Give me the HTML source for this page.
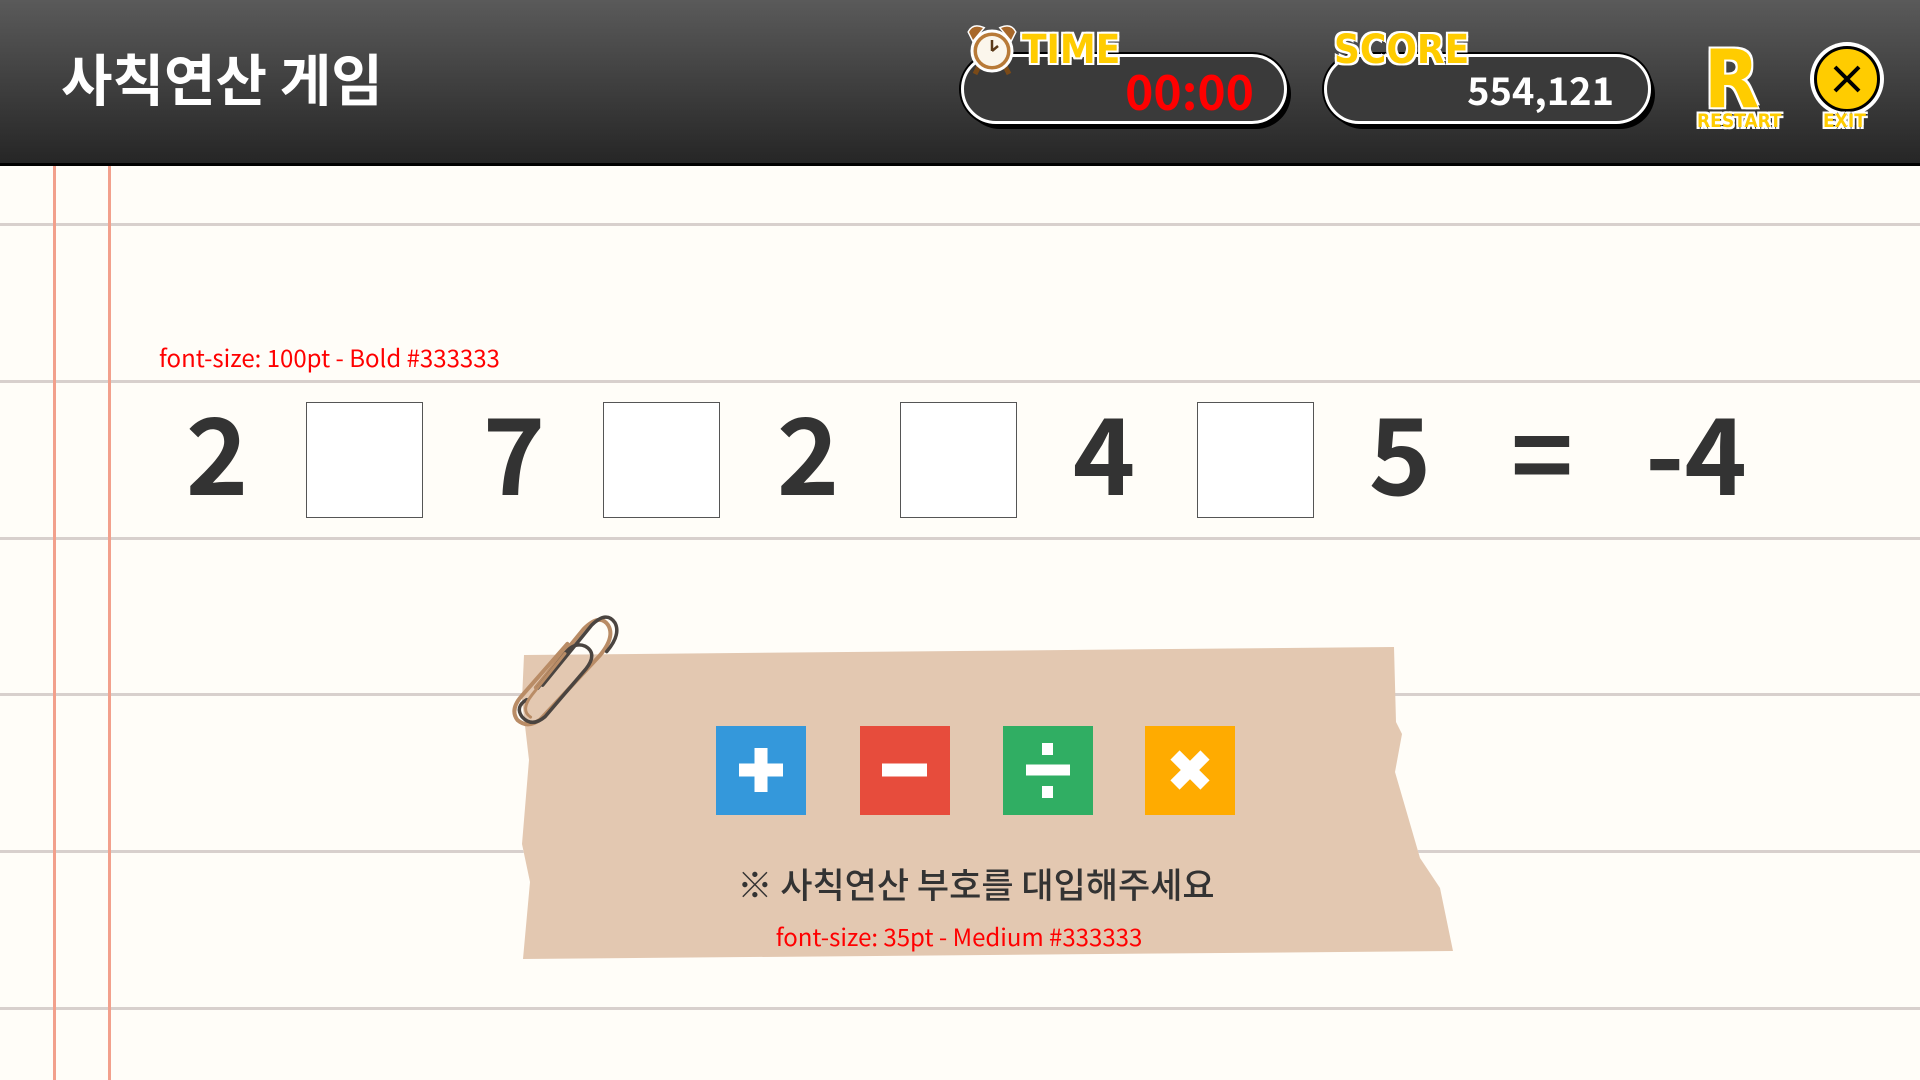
<!DOCTYPE html>
<html><head><meta charset="utf-8"><style>
*{margin:0;padding:0;box-sizing:border-box}
body{width:1920px;height:1080px;overflow:hidden;background:#fffdf8;position:relative;font-family:"Liberation Sans","Noto Sans CJK KR",sans-serif}
.hdr{position:absolute;left:0;top:0;width:1920px;height:166px;background:linear-gradient(#5a5a5a,#262626);border-bottom:3px solid #000}
.title{position:absolute;left:61px;top:50px;color:#fff;font-size:56px;font-weight:bold;font-family:"Noto Sans CJK KR",sans-serif;line-height:1}
.pill{position:absolute;height:70px;border:3px solid #fff;border-radius:35px;background:#3a3a3a;box-shadow:4px 5px 0 #000,0 0 0 2px #000}
.pill span{position:absolute;right:32px;top:4px;font-weight:bold;line-height:56px;font-family:"Noto Sans CJK KR",sans-serif}
.lbl{position:absolute;font-weight:bold;color:#ffcc00;-webkit-text-stroke:2px #000;paint-order:stroke fill;text-shadow:2px 2px 0 #fff,-2px -2px 0 #fff,2px -2px 0 #fff,-2px 2px 0 #fff;line-height:1;font-family:"DejaVu Sans Condensed","Liberation Sans",sans-serif}
.hl{position:absolute;left:0;width:1920px;height:3px;background:#d8d0cd}
.vl{position:absolute;top:166px;height:914px;width:3px;background:#f2a08c}
.num{position:absolute;top:389px;font-size:106px;font-weight:bold;color:#333;line-height:120px;text-align:center;width:120px;font-family:"Noto Sans CJK KR",sans-serif}
.box{position:absolute;top:402px;width:117px;height:116px;border:1.5px solid #555;background:#fff}
.red{position:absolute;color:#f00;font-size:24px;font-family:"Noto Sans CJK KR",sans-serif;line-height:1}
.btn{position:absolute;top:726px;width:90px;height:89px}
</style></head><body>
<div class="hdr">
<div class="title">사칙연산 게임</div>
<div class="pill" style="left:961px;top:54px;width:326px"><span style="color:#f00;font-size:48px;right:30px">00:00</span></div>
<div class="pill" style="left:1324px;top:54px;width:327px"><span style="color:#fff;font-size:38px;right:34px">554,121</span></div>
<svg style="position:absolute;left:965px;top:22px" width="54" height="54" viewBox="0 0 54 54">
<path d="M8 18 L4 10 Q8 2 18 6 Z M46 18 L50 10 Q46 2 36 6 Z" fill="#a8682a" stroke="#fff" stroke-width="3" paint-order="stroke"/>
<path d="M14 44 L10 52 M40 44 L44 52" stroke="#7a4a18" stroke-width="5"/>
<circle cx="27" cy="29" r="20" fill="#b87a38" stroke="#fff" stroke-width="3"/>
<circle cx="27" cy="29" r="15" fill="#fbf6ec"/>
<path d="M27 29 L27 18 M27 29 L33 24" stroke="#5a3a1a" stroke-width="2.5"/>
</svg>
<div class="lbl" style="left:1022px;top:30px;font-size:40px">TIME</div>
<div class="lbl" style="left:1334px;top:30px;font-size:40px">SCORE</div>
<div class="lbl" style="left:1704px;top:40px;font-size:80px;-webkit-text-stroke:3px #000">R</div>
<div class="lbl" style="left:1697px;top:112px;font-size:19px">RESTART</div>
<div style="position:absolute;left:1810px;top:42px;width:74px;height:74px;border-radius:50%;background:#fff;padding:4px"><div style="width:66px;height:66px;border-radius:50%;background:#ffcc00;border:3px solid #000;position:relative">
<svg width="60" height="60" viewBox="0 0 60 60" style="position:absolute;left:0;top:0"><path d="M18 18 L42 42 M42 18 L18 42" stroke="#000" stroke-width="4"/></svg></div></div>
<div class="lbl" style="left:1823px;top:112px;font-size:19px">EXIT</div>
</div>
<div class="hl" style="top:223px"></div><div class="hl" style="top:380px"></div><div class="hl" style="top:537px"></div><div class="hl" style="top:693px"></div><div class="hl" style="top:850px"></div><div class="hl" style="top:1007px"></div>
<div class="vl" style="left:53px"></div><div class="vl" style="left:108px"></div>
<div class="red" style="left:159px;top:345px">font-size: 100pt - Bold #333333</div>
<div class="num" style="left:157px">2</div><div class="box" style="left:306px"></div>
<div class="num" style="left:454px">7</div><div class="box" style="left:603px"></div>
<div class="num" style="left:748px">2</div><div class="box" style="left:900px"></div>
<div class="num" style="left:1044px">4</div><div class="box" style="left:1197px"></div>
<div class="num" style="left:1340px">5</div>
<div class="num" style="left:1482px">=</div>
<div class="num" style="left:1626px;width:140px">-4</div>
<svg style="position:absolute;left:0;top:0" width="1920" height="1080">
<polygon points="505,640 1390,632 1395,720 1402,735 1395,772 1420,858 1440,888 1453,950 523,958 530,880 522,845 528,760 522,700 526,660" fill="#fffdf8"/>
<polygon points="524,655 1394,647 1396,722 1402,734 1395,772 1420,858 1440,888 1453,951 523,959 530,882 522,844 529,760 522,700" fill="#e3c8b1"/>
<g fill="none" stroke-linecap="round" transform="rotate(14,612,622)">
<path d="M560 700 L592 632 Q604 612 615 622 Q625 632 614 654 L572 730 Q562 742 550 736 Q540 728 548 712 L580 650" stroke="#b98c66" stroke-width="4" transform="translate(-6,4)"/>
<path d="M560 700 L593 630 Q604 612 615 622 Q624 632 614 652" stroke="#4a4440" stroke-width="3.5"/>
<path d="M548 718 Q538 728 548 736 Q560 744 570 730 L598 674 Q606 656 592 652 Q580 650 574 664 L556 704" stroke="#4a4440" stroke-width="3.5"/>
<path d="M574 664 L552 712 Q544 730 556 734" stroke="#b98c66" stroke-width="3"/>
</g>
</svg>
<div class="btn" style="left:716px;background:#3498db"><svg width="90" height="89"><path d="M45 22 V66 M23 44 H67" stroke="#fff" stroke-width="13"/></svg></div>
<div class="btn" style="left:860px;background:#e74c3c"><svg width="90" height="89"><path d="M22 44 H67" stroke="#fff" stroke-width="13"/></svg></div>
<div class="btn" style="left:1003px;background:#30ae63"><svg width="90" height="89"><path d="M23 44 H67" stroke="#fff" stroke-width="11"/><rect x="39" y="17" width="11" height="12" fill="#fff"/><rect x="39" y="60" width="11" height="12" fill="#fff"/></svg></div>
<div class="btn" style="left:1145px;background:#ffab00"><svg width="90" height="89"><path d="M30 29 L60 59 M60 29 L30 59" stroke="#fff" stroke-width="13"/></svg></div>
<div style="position:absolute;left:0;width:1952px;top:862px;text-align:center;font-size:35px;color:#333;font-family:'Noto Sans CJK KR',sans-serif;font-weight:500;line-height:44px">※ 사칙연산 부호를 대입해주세요</div>
<div class="red" style="left:0;width:1918px;text-align:center;top:924px">font-size: 35pt - Medium #333333</div>
</body></html>
